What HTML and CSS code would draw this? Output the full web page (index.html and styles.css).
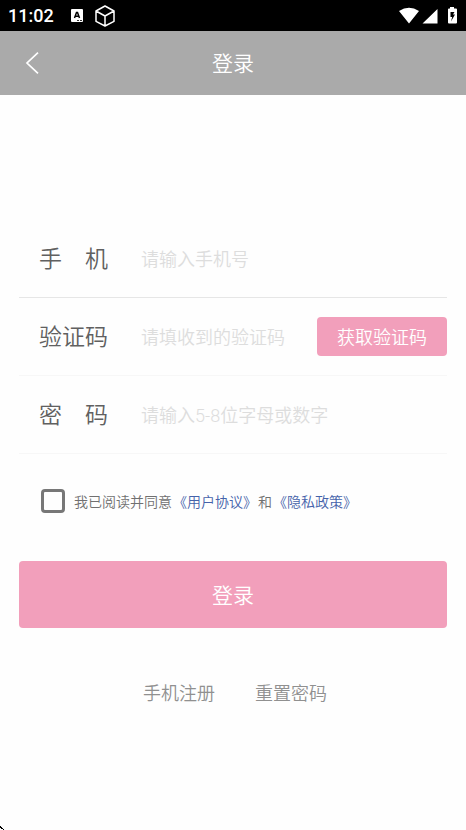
FILE: index.html
```html
<!DOCTYPE html>
<html lang="zh-CN">
<head>
<meta charset="utf-8">
<meta name="viewport" content="width=device-width, initial-scale=1">
<title>登录</title>
<link rel="stylesheet" href="styles.css">
</head>
<body>
<div class="status">
  <span class="clock">11:02</span>
  <svg class="app-icon" width="12" height="13" viewBox="0 0 12 13" aria-hidden="true"><rect width="12" height="13" rx="1" fill="#fff"/><path d="M3.500 9L5.500 3.500h1L8.500 9M4.500 7.300h3" fill="none" stroke="#000" stroke-width="1.500"/><path d="M6 11.500h5" stroke="#000" stroke-width=".8" stroke-dasharray="2 1"/></svg>
  <svg width="20" height="22" viewBox="0 0 20 22" fill="none" stroke="#fff" stroke-width="1.5" stroke-linejoin="round" aria-hidden="true"><path d="M10 1l9 5v10.300l-9 4.700-9-4.700V6zM1 6l9 5 9-5M10 11v10"/></svg>
  <svg class="system" width="60" height="18" viewBox="0 0 60 18" fill="#fff" aria-hidden="true"><path d="M1 4Q11-2.500 21 4L11 16.500zM24.500 16.500L39.500 2v14.500z"/><path fill-rule="evenodd" d="M52 1.500V0h4v1.500h2q1 0 1 1V15.500q0 1-1 1h-7q-1 0-1-1V2.500q0-1 1-1zM52.500 5v5h1.700L53 14.500l4-7h-2l1.500-2.500z"/></svg>
</div>
<header class="bar">
  <button class="back" type="button" aria-label="返回"><svg width="14" height="22" viewBox="0 0 14 22" fill="none" stroke="#fff" stroke-width="1.700"><path d="M13 .7L2 11l11 10.300"/></svg></button>
  <h1>登录</h1>
</header>
<main>
  <form>
    <div class="row first">
      <label for="phone"><span>手</span><span>机</span></label>
      <input id="phone" type="tel" placeholder="请输入手机号">
    </div>
    <div class="row">
      <label for="code">验证码</label>
      <input id="code" type="text" placeholder="请填收到的验证码">
      <button class="send" type="button">获取验证码</button>
    </div>
    <div class="row">
      <label for="password"><span>密</span><span>码</span></label>
      <input id="password" type="password" placeholder="请输入5-8位字母或数字">
    </div>
    <div class="agree">
      <input id="agree" type="checkbox">
      <p><label for="agree">我已阅读并同意</label><a href="#terms">《用户协议》</a><span>和</span><a href="#privacy">《隐私政策》</a></p>
    </div>
    <button class="login" type="submit">登录</button>
  </form>
  <nav>
    <a href="#register">手机注册</a>
    <a href="#reset">重置密码</a>
  </nav>
</main>
<svg class="corner" width="4" height="4" viewBox="0 0 4 4" aria-hidden="true"><path d="M0 0h1v1h1v1h1v1h1v1H3V3H1V2H0z"/></svg>
</body>
</html>
```
FILE: styles.css
```css
* {
  box-sizing: border-box;
}

body {
  display: flex;
  flex-direction: column;
  min-height: 100vh;
  margin: 0;
  background: #fefefe;
  color: #606060;
  font-family: Roboto, "Noto Sans CJK SC", sans-serif;
  font-weight: 350;
}

button,
input {
  margin: 0;
  padding: 0;
  border: 0;
  background: none;
  font: inherit;
}

a {
  text-decoration: none;
}

svg {
  display: block;
}

.status {
  display: flex;
  align-items: center;
  height: 31px;
  padding: 0 8px;
  background: #000;
  color: #fff;
}

.clock {
  font-size: 18px;
  font-weight: 500;
}

.app-icon {
  margin: 0 12px 0 17px;
}

.system {
  margin-left: auto;
}

.bar {
  display: grid;
  grid-template-columns: 64px 1fr 64px;
  align-items: center;
  height: 64px;
  background: #aaa;
  color: #fff;
}

.back {
  display: flex;
  justify-content: center;
}

h1 {
  margin: 0;
  padding-bottom: 2px;
  font-size: 21px;
  font-weight: 350;
  text-align: center;
}

main {
  flex: 1;
  padding: 125px 19px 0;
}

.row {
  display: flex;
  align-items: center;
  height: 78px;
  padding-left: 20px;
  border-bottom: 1px solid #f7f7f7;
}

.row.first {
  border-color: #e6e6e6;
}

.row label {
  display: flex;
  justify-content: space-between;
  width: 69px;
  margin-right: 33px;
  padding-bottom: 4px;
  font-size: 23px;
}

.row input {
  flex: 1;
  min-width: 0;
  height: 40px;
  padding-top: 2px;
  outline: 0;
  font-size: 18px;
}

::placeholder {
  color: #ddd;
  opacity: 1;
}

.send,
.login {
  padding-bottom: 2px;
  border-radius: 4px;
  background: #f29fbb;
  color: #fff;
}

.send {
  width: 130px;
  height: 39px;
  font-size: 18px;
}

.agree {
  display: flex;
  align-items: center;
  gap: 9px;
  margin: 35px 0 48px 22px;
  color: #707070;
  font-size: 14px;
}

.agree input {
  width: 24px;
  height: 24px;
  border: 3px solid #777;
  border-radius: 4px;
  appearance: none;
}

.agree input:checked {
  background: #f29fbb;
}

.agree p {
  display: flex;
  gap: 1px;
  margin: 0;
}

.agree a {
  color: #4562aa;
}

.login {
  display: block;
  width: 100%;
  height: 67px;
  font-size: 21px;
}

nav {
  display: flex;
  justify-content: center;
  gap: 40px;
  margin-top: 51px;
  padding-left: 4px;
  font-size: 18px;
}

nav a {
  color: #909090;
}
```
